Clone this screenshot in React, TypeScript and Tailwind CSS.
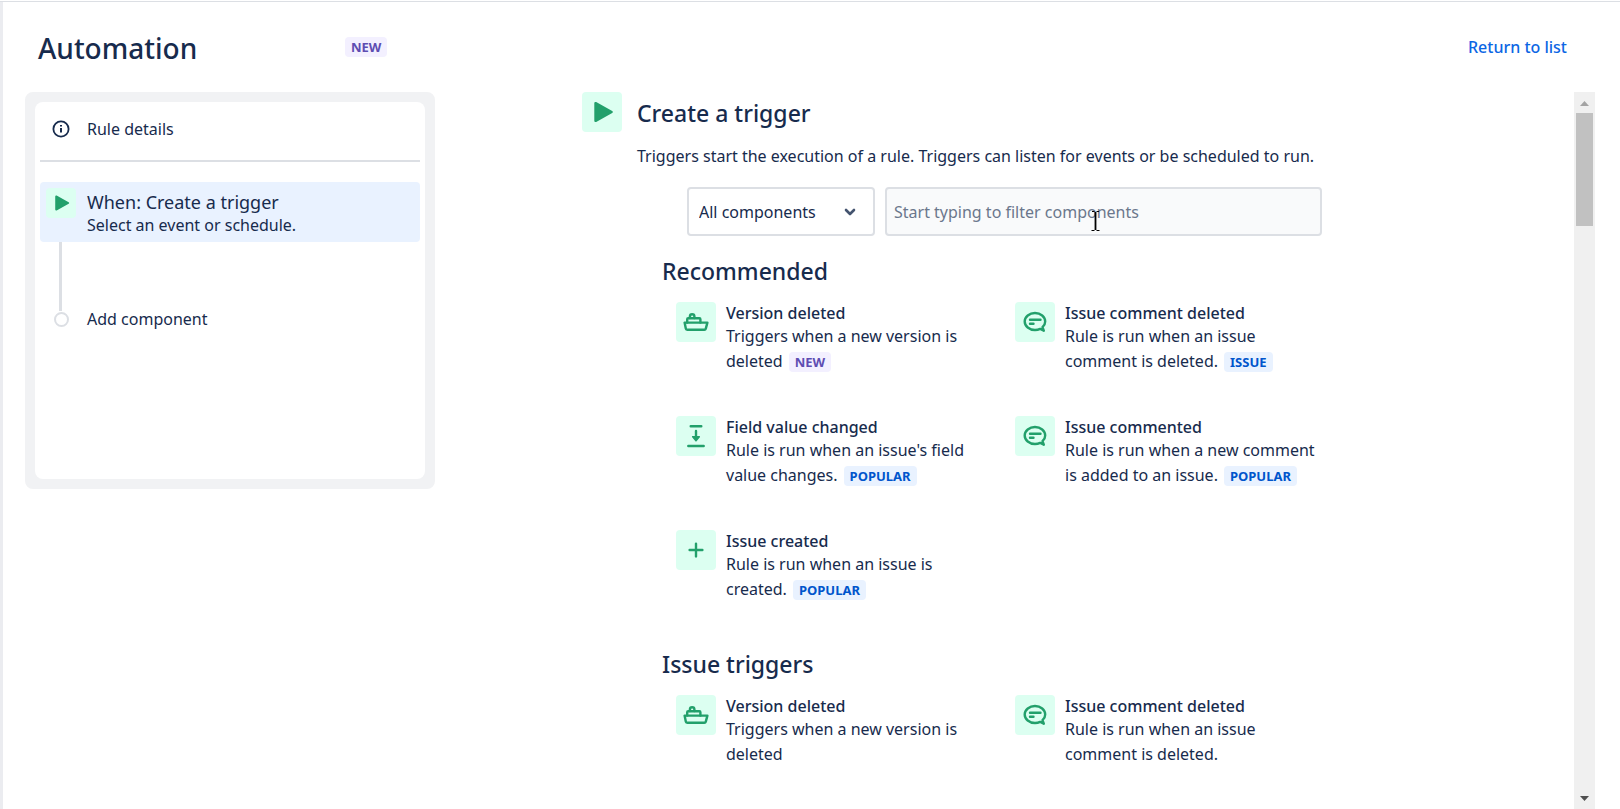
import React from "react";

type Tone = "new" | "info";
type IconName = "ship" | "comment" | "field" | "plus";

interface Trigger {
  icon: IconName;
  title: string;
  text: string;
  badge?: { label: string; tone: Tone };
}

const recommended: Trigger[] = [
  { icon: "ship", title: "Version deleted", text: "Triggers when a new version is deleted", badge: { label: "NEW", tone: "new" } },
  { icon: "comment", title: "Issue comment deleted", text: "Rule is run when an issue comment is deleted.", badge: { label: "ISSUE", tone: "info" } },
  { icon: "field", title: "Field value changed", text: "Rule is run when an issue's field value changes.", badge: { label: "POPULAR", tone: "info" } },
  { icon: "comment", title: "Issue commented", text: "Rule is run when a new comment is added to an issue.", badge: { label: "POPULAR", tone: "info" } },
  { icon: "plus", title: "Issue created", text: "Rule is run when an issue is created.", badge: { label: "POPULAR", tone: "info" } },
];

const issueTriggers: Trigger[] = [
  { icon: "ship", title: "Version deleted", text: "Triggers when a new version is deleted" },
  { icon: "comment", title: "Issue comment deleted", text: "Rule is run when an issue comment is deleted." },
];

function Badge({ label, tone }: { label: string; tone: Tone }) {
  const colors = tone === "new" ? "bg-[#f3f0ff] text-[#5e4db2]" : "bg-[#e9f2ff] text-[#0055cc]";
  return (
    <span className={`inline-block rounded px-[6px] text-[13px] leading-5 font-bold ${colors}`}>{label}</span>
  );
}

function PlayIcon({ className }: { className: string }) {
  return (
    <svg viewBox="0 0 40 40" className={className} aria-hidden="true">
      <path d="M12.3 11.2c0-1.1 1-1.6 1.9-1.1l16 8.9c.9.5.9 1.5 0 2l-16 8.9c-.9.5-1.9 0-1.9-1.1z" fill="#22a06b" />
    </svg>
  );
}

function TriggerIcon({ name }: { name: IconName }) {
  return (
    <span className="size-10 shrink-0 rounded bg-[#dcfff1]">
      <svg viewBox="0 0 40 40" className="size-10" fill="none" stroke="#22a06b" strokeWidth="2.4" strokeLinejoin="round" strokeLinecap="round" aria-hidden="true">
        {name === "ship" && (
          <>
            <path d="M8.6 20.6h22.8l-1.6 6c-.2.7-.7 1.1-1.4 1.1H11.2c-.8 0-1.3-.4-1.4-1.1z" />
            <path d="M11.2 20.6v-3.3c0-.6.4-1 1-1h11.2c.6 0 1 .4 1 1v3.3" />
            <path d="M13.9 16v-1.5c0-1.300.9-2.200 2.200-2.200s2.300.9 2.300 2.200V16" />
          </>
        )}
        {name === "comment" && (
          <>
            <path d="M27.5 25.2c1.700-1.500 2.700-3.500 2.700-5.700 0-4.700-4.600-8.500-10.200-8.500S9.700 14.800 9.700 19.500 14.300 28 20 28c1.900 0 3.700-.4 5.200-1.100l3.600 1.800z" />
            <path d="M15 17.700h10.500M15 21.700h3.500" />
          </>
        )}
        {name === "field" && (
          <>
            <path d="M14.7 10.2h10.600M12.300 30h15.400M20 15v6" />
            <path d="M16.7 20.7h6.600L20 24.800z" fill="#22a06b" strokeWidth="1.5" />
          </>
        )}
        {name === "plus" && <path d="M20 13.6v12.8M13.6 20h12.8" />}
      </svg>
    </span>
  );
}

function TriggerCard({ trigger }: { trigger: Trigger }) {
  return (
    <li>
      <button type="button" className="flex w-full items-start gap-[10px] px-[14px] text-left">
        <TriggerIcon name={trigger.icon} />
        <span className="block min-w-0 flex-1">
          <span className="block leading-[22px] font-medium">{trigger.title}</span>
          <span className="block leading-[25px]">
            {trigger.text}
            {trigger.badge && (
              <span className="ml-[6px]">
                <Badge {...trigger.badge} />
              </span>
            )}
          </span>
        </span>
      </button>
    </li>
  );
}

function TriggerSection({ title, triggers }: { title: string; triggers: Trigger[] }) {
  return (
    <section className="w-full max-w-[678px]">
      <h3 className="mb-[18px] text-[23px] leading-[26px] font-medium">{title}</h3>
      <ul className="grid grid-cols-2 gap-y-[42px]">
        {triggers.map((t) => (
          <TriggerCard key={t.title} trigger={t} />
        ))}
      </ul>
    </section>
  );
}

function RulePanel() {
  return (
    <aside className="min-h-[397px] w-[410px] shrink-0 rounded-lg border-10 border-[#f1f2f4] bg-[#f1f2f4]">
      <div className="min-h-[377px] rounded-lg bg-white px-[5px]">
        <button type="button" className="flex h-[60px] w-full items-center gap-[17px] border-b-2 border-[#dcdfe4] px-3 pb-1 text-left">
          <svg viewBox="0 0 18 18" className="size-[18px]" fill="none" stroke="#172b4d" aria-hidden="true">
            <circle cx="9" cy="9" r="7.6" strokeWidth="1.8" />
            <path d="M9 8v4.5M9 4.9v1.7" strokeWidth="2" />
          </svg>
          Rule details
        </button>
        <button type="button" className="mt-5 flex h-[60px] w-full items-start gap-[11px] rounded bg-[#e9f2ff] p-[6px] text-left">
          <span className="size-[30px] shrink-0 rounded-sm bg-[#dcfff1]">
            <PlayIcon className="size-[30px]" />
          </span>
          <span className="block pt-[2px]">
            <span className="block text-lg leading-6">When: Create a trigger</span>
            <span className="block leading-[22px]">Select an event or schedule.</span>
          </span>
        </button>
        <div className="ml-[19px] h-[69px] w-[3px] bg-[#dcdfe4]" />
        <button type="button" className="flex w-full items-center gap-[18px] pl-[14px] text-left leading-4">
          <span className="size-[15px] rounded-full border-2 border-[#dcdfe4]" />
          Add component
        </button>
      </div>
    </aside>
  );
}

function ScrollTrack() {
  return (
    <div className="flex w-[21px] shrink-0 flex-col items-center bg-[#f0f0f0]" aria-hidden="true">
      <svg viewBox="0 0 21 21" className="size-[21px]">
        <path d="M6 14h9l-4.5-5z" fill="#a3a3a3" />
      </svg>
      <div className="h-[113px] w-[17px] bg-[#c1c1c1]" />
      <svg viewBox="0 0 21 21" className="mt-auto size-[21px]">
        <path d="M6 8h9l-4.5 5z" fill="#505050" />
      </svg>
    </div>
  );
}

export default function App() {
  return (
    <div className="h-screen overflow-hidden bg-white pt-px font-['Noto_Sans','Open_Sans',sans-serif] text-base text-[#172b4d]">
      <div className="flex h-full flex-col border-t border-[#dcdfe4]">
        <div className="flex min-h-0 flex-1 flex-col border-l-3 border-[#ebecf0]">
          <header className="flex h-[90px] shrink-0 items-center pr-[53px] pl-[35px]">
            <h1 className="w-[307px] pt-[2px] text-[28px] leading-9 font-medium">Automation</h1>
            <Badge label="NEW" tone="new" />
            <a href="#rules" className="ml-auto font-medium text-[#0c66e4]">Return to list</a>
          </header>
          <div className="flex min-h-0 flex-1 items-stretch pr-[25px] pl-[22px]">
            <div>
              <RulePanel />
            </div>
            <main className="min-w-0 flex-1 overflow-hidden pl-[147px]">
              <div className="flex items-start gap-[15px]">
                <span className="size-10 shrink-0 rounded bg-[#dcfff1]">
                  <PlayIcon className="size-10" />
                </span>
                <div>
                  <h2 className="text-[23px] leading-[42px] font-medium">Create a trigger</h2>
                  <p className="mt-[10px] leading-6">
                    Triggers start the execution of a rule. Triggers can listen for events or be scheduled to run.
                  </p>
                </div>
              </div>
              <form className="mt-[19px] ml-[105px] flex max-w-[635px] items-start gap-[10px]">
                <div className="relative w-[188px] shrink-0">
                  <select aria-label="Component type" className="h-[49px] w-full appearance-none rounded border-2 border-[#dcdfe4] bg-white px-[10px] outline-none">
                    <option>All components</option>
                  </select>
                  <svg viewBox="0 0 12 8" className="pointer-events-none absolute top-[21px] right-[19px] h-2 w-3" fill="none" stroke="#44546f" strokeWidth="2.6" strokeLinecap="round" strokeLinejoin="round" aria-hidden="true">
                    <path d="M2 2l4 4 4-4" />
                  </svg>
                </div>
                <div className="relative min-w-0 flex-1">
                  <input aria-label="Filter components" placeholder="Start typing to filter components" className="h-[49px] w-full rounded border-2 border-[#dcdfe4] bg-[#f9fafb] px-[7px] outline-none placeholder:text-[#6b778c]" />
                  <svg viewBox="0 0 9 20" className="pointer-events-none absolute top-6 left-[206px] h-5 w-[9px]" fill="none" stroke="#000" aria-hidden="true">
                    <path d="M1 .5h2.500M5.500 .5H8M.5 19.500h3M5.500 19.500h3" />
                    <path d="M4.500 1v18" strokeWidth="1.800" />
                  </svg>
                </div>
              </form>
              <div className="mt-[22px] ml-20 flex flex-col gap-[49px]">
                <TriggerSection title="Recommended" triggers={recommended} />
                <TriggerSection title="Issue triggers" triggers={issueTriggers} />
              </div>
            </main>
            <ScrollTrack />
          </div>
        </div>
      </div>
    </div>
  );
}
